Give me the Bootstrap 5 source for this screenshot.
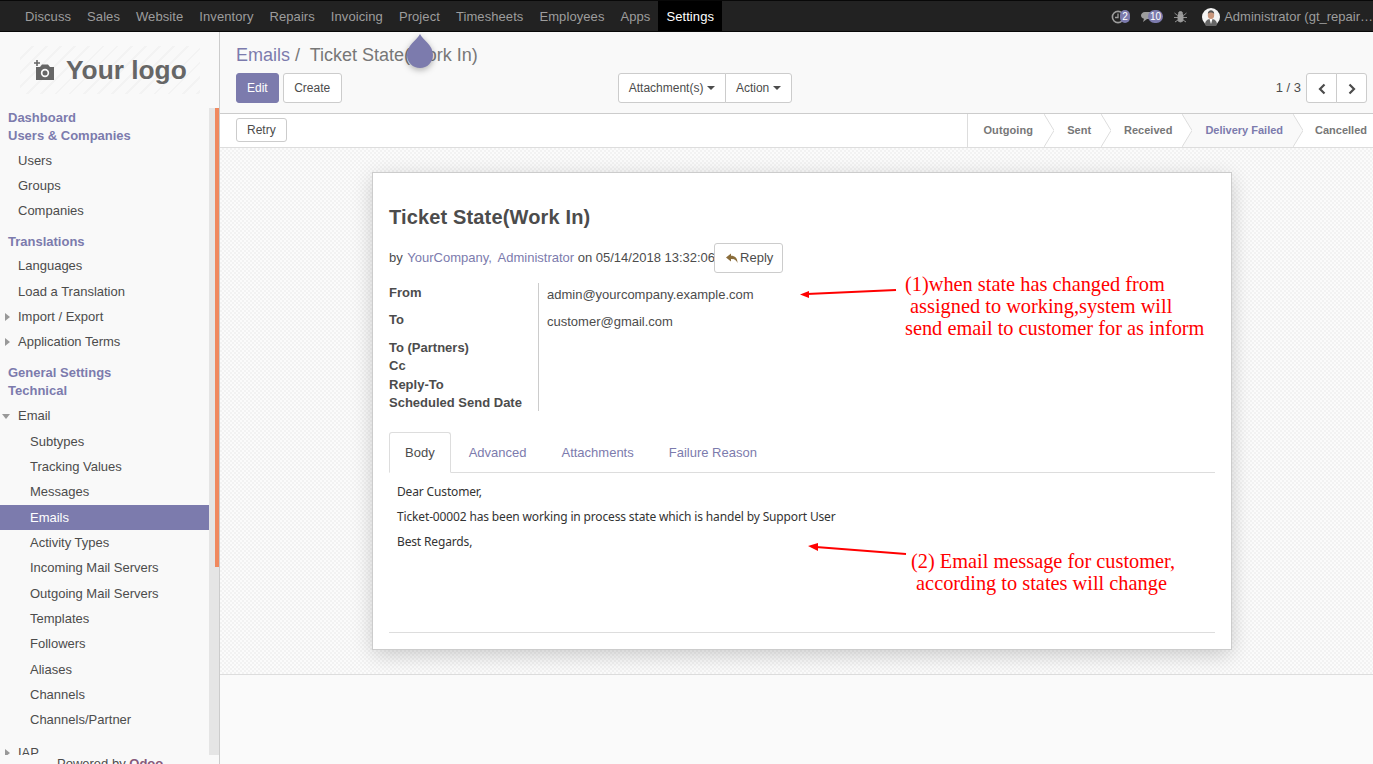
<!DOCTYPE html>
<html lang="en">
<head>
<meta charset="utf-8">
<title>Emails</title>
<link href="https://cdn.jsdelivr.net/npm/bootstrap@5.3.0/dist/css/bootstrap.min.css" rel="stylesheet">
<style>
html,body{height:764px;overflow:hidden}
body{font-family:"Liberation Sans",Arial,sans-serif;font-size:13px;color:#4c4c4c;background:#fff;line-height:18px}
.topbar{height:32px;background:#222;border:1px solid #080808;border-width:1px 0;padding:0 0 0 17px;flex-wrap:nowrap;justify-content:flex-start}
.topbar .nav-link{color:#9d9d9d;padding:0 8px;font-size:13px;line-height:31px;height:30px;letter-spacing:.08px}
.topbar .nav-link.on{color:#fff;background:#000}
.tright{margin-left:auto;color:#9d9d9d;height:30px;padding-top:1px}
.tbadge{background:#7c7bad;color:#fff;font-size:10px;line-height:13px;border-radius:7px;padding:0 2px;display:inline-block;min-width:10px;text-align:center}
.shell{height:732px}
.sidebar{width:220px;flex:none;background:#f9f9f9;border-right:1px solid #ccc;overflow:hidden}
.logobox{height:76px;padding:14px 0 0 20px}
.logoinner{width:180px;height:48px;background:repeating-linear-gradient(135deg,#f9f9f9 0 8px,#f3f3f3 8px 10px);color:#666;font-weight:700;font-size:26.300px;line-height:48px;padding-left:13px;gap:11px}
.menuwrap{height:647px}
.menucol{width:209px;overflow:hidden;padding-top:1px}
.track{width:10px;background:#e5e5e5;flex:none}
.thumb{width:4px;height:459px;background:#f0895f;margin-left:auto}
.mhead{display:block;font-weight:700;color:#7c7bad;height:18px;line-height:18px;padding-left:8px;text-decoration:none}
.mlist{margin:3px 0 9px}
.mlist.lista{margin:2.600px 0 9.400px}
.mlist.listb{margin:2.300px 0 9.700px}
.mlist.listc{margin:3px 0 7px}
.mrow{height:25.330px;line-height:25.330px;padding-left:18px;display:flex;align-items:center;color:#4c4c4c;position:relative}
.mrow.sub{padding-left:30px}
.mrow.on{background:#7c7bad;color:#fff}
.tri{position:absolute;left:5px;top:9px;width:0;height:0;border:4px solid transparent;border-left:5px solid #999;border-right:0}
.tri.open{left:2px;top:11px;border:4px solid transparent;border-top:5px solid #999;border-bottom:0}
.poweredby{height:9px;overflow:hidden;background:#f9f9f9;padding-left:57px;line-height:18px;font-size:13px;white-space:nowrap}
.poweredby b{color:#875a7b}
.mainpane{min-width:0;flex:1 1 0;background:#fafafa;position:relative}
.cpanel{height:82px;background:#f9f9f9;border-bottom:1px solid #ccc;padding:10px 6px 0 16px}
.crumbs{font-size:18px;line-height:26px;height:31px;color:#777}
.crumbs a{color:#7c7bad;text-decoration:none}
.btnrow{height:30px}
.xbtn{font-size:12px;line-height:16px;padding:6px 10px;height:30px;border-radius:3px;background:#fff;border:1px solid #ccc;color:#4c4c4c}
.xbtn.prim{background:#7c7bad;border-color:#7c7bad;color:#fff;padding:6px 10px}
.createx{padding:6px 10.500px}
.actx{padding:6px 9.500px}
.caretx{display:inline-block;border:4px solid transparent;border-top:4px solid currentColor;border-bottom:0;margin-left:4px;vertical-align:2px}
.pager{font-size:13px;color:#4c4c4c;margin-right:5px;line-height:30px}
.statusrow{height:34px;background:#fff;border-bottom:1px solid #ddd}
.retrybtn{height:24px;padding:2px 10px;font-size:12px;line-height:18px;margin:4px 0 0 16px}
.statuslist{margin-left:auto;height:33px;border-left:1px solid #ddd;font-weight:700;font-size:11px;color:#777;line-height:33px}
.stitem{padding:0 10px 0 13px;white-space:nowrap}
.stitem.first{padding:0 11px 0 15px;letter-spacing:.12px}
.stitem.last{padding:0 6px 0 12px}
.stitem.act{background:#f9f9f9;color:#7c7bad}
.chev{display:block;flex:none}
.sheetzone{height:527px;border-bottom:1px solid #ddd;padding:24px 0 0 152px;background-color:#fbfbfb;background-image:conic-gradient(#f2f2f2 25%,transparent 0 50%,#f2f2f2 0 75%,transparent 0);background-size:4px 4px}
.sheet{width:860px;height:478px;background:#fff;border:1px solid #ccc;box-shadow:0 5px 20px -1px rgba(0,0,0,.2);padding:30px 16px 0;position:relative}
.sheet h1{font-size:20px;font-weight:700;line-height:28px;margin:0 0 12px;color:#4c4c4c;letter-spacing:.15px}
.byline{height:40px;align-items:flex-start;line-height:30px;white-space:nowrap}
.bytext{margin-right:-1px}
.byline a{color:#7c7bad;text-decoration:none;margin-left:1px}
.byline a+a{margin-left:2px}
.replybtn{padding:5px 9px 5px 11px;display:flex;align-items:center;gap:2px;font-size:13px}
.infogrid{height:128px}
.labels{width:150px;font-weight:700;flex:none;border-right:1px solid #ccc;height:128px}
.labels div,.vals div{white-space:nowrap}
.l1{height:28px;padding-top:1px}.l2{height:28px}.l3{height:18.400px}
.vals{padding-left:8px}
.v1{height:28px;padding-top:3px}.v2{padding-top:2px}
.tabsx{margin-top:21px;border-bottom:1px solid #ddd;height:41px;font-size:13px}
.tabsx .nav-link{color:#7c7bad;padding:11px 15px;line-height:18px;height:41px;margin:0 3px 0 0;border-radius:3px 3px 0 0;font-size:13px}
.tabsx .nav-link.active{color:#4c4c4c;border-color:#ddd #ddd #fff;background:#fff;margin-right:2px}
.mailbody{font-family:"Noto Sans",sans-serif;font-size:12px;letter-spacing:-.15px;color:#333;padding:10px 8px 0;height:160px;border-bottom:1px solid #ddd}
.mailbody p{margin:0 0 7px;line-height:18px;height:18px}
.note{position:absolute;font-family:"Liberation Serif",serif;font-size:20.350px;line-height:22px;color:#f00;white-space:pre;margin:0}
.arr{position:absolute;display:block}
.drop{position:absolute;left:185px;top:1px;filter:drop-shadow(0 2px 3px rgba(0,0,0,.3))}
</style>
</head>
<body>
<nav class="navbar topbar d-flex">
  <ul class="nav flex-nowrap">
    <li class="nav-item"><a class="nav-link" href="#">Discuss</a></li>
    <li class="nav-item"><a class="nav-link" href="#">Sales</a></li>
    <li class="nav-item"><a class="nav-link" href="#">Website</a></li>
    <li class="nav-item"><a class="nav-link" href="#">Inventory</a></li>
    <li class="nav-item"><a class="nav-link" href="#">Repairs</a></li>
    <li class="nav-item"><a class="nav-link" href="#">Invoicing</a></li>
    <li class="nav-item"><a class="nav-link" href="#">Project</a></li>
    <li class="nav-item"><a class="nav-link" href="#">Timesheets</a></li>
    <li class="nav-item"><a class="nav-link" href="#">Employees</a></li>
    <li class="nav-item"><a class="nav-link" href="#">Apps</a></li>
    <li class="nav-item"><a class="nav-link on" href="#">Settings</a></li>
  </ul>
  <div class="d-flex align-items-center tright">
    <svg width="14" height="14" viewBox="0 0 14 14" class="chev"><circle cx="7" cy="7" r="5.600" fill="none" stroke="#9d9d9d" stroke-width="1.600"/><path d="M7 3.500V7.500H4" fill="none" stroke="#9d9d9d" stroke-width="1.300"/></svg>
    <span class="tbadge" style="margin-left:-5px">2</span>
    <svg width="14" height="12" viewBox="0 0 14 12" class="chev" style="margin-left:11px"><path d="M4 1h6c2.500 0 4 1.500 4 3.500S12.500 8 10 8H6l-4 3 1-3.200C1 7.300 0 6 0 4.500S1.500 1 4 1z" fill="#9d9d9d"/></svg>
    <span class="tbadge" style="margin-left:-7px">10</span>
    <svg width="13" height="13" viewBox="0 0 13 13" class="chev" style="margin-left:11px"><path d="M4 4.500h5v5a2.500 2.500 0 0 1-5 0zM4.500 3.500a2 2 0 0 1 4 0zM0.500 3l3 2.500M12.500 3l-3 2.500M0 7.500h4M13 7.500H9M1 12l3-2M12 12l-3-2" fill="#9d9d9d" stroke="#9d9d9d" stroke-width=".9"/></svg>
    <svg width="18" height="18" viewBox="0 0 18 18" class="chev" style="margin-left:15px"><circle cx="9" cy="9" r="9" fill="#f4f4f4"/><ellipse cx="9" cy="7" rx="3.200" ry="4" fill="#c9977c"/><path d="M5.800 6c0-5 6.400-5 6.400 0-1-2-5.400-2-6.400 0z" fill="#555"/><path d="M3 17c0-5 3-6 6-6s6 1 6 6a9 9 0 0 1-12 0z" fill="#666"/><path d="M7.500 11h3L9 16z" fill="#fff"/></svg>
    <span class="text-nowrap" style="margin-left:4px">Administrator (gt_repair…</span>
  </div>
</nav>
<div class="d-flex shell">
  <aside class="sidebar d-flex flex-column">
    <div class="logobox">
      <div class="logoinner d-flex align-items-center">
        <svg width="22" height="22" viewBox="0 0 22 22" class="chev"><path d="M4 1v6M1 4h6" stroke="#666" stroke-width="1.600"/><path d="M3 8h4l2-2.500h6L17 8h4v13H3z" fill="#666"/><circle cx="12" cy="14" r="4.200" fill="#f9f9f9"/><circle cx="12" cy="14" r="2.500" fill="#666"/></svg>
        <span>Your logo</span>
      </div>
    </div>
    <div class="d-flex menuwrap">
      <div class="menucol">
        <a class="mhead" href="#">Dashboard</a>
        <a class="mhead" href="#">Users &amp; Companies</a>
        <div class="mlist lista">
          <div class="mrow">Users</div><div class="mrow">Groups</div><div class="mrow">Companies</div>
        </div>
        <a class="mhead" href="#">Translations</a>
        <div class="mlist listb">
          <div class="mrow">Languages</div><div class="mrow">Load a Translation</div>
          <div class="mrow"><i class="tri"></i>Import / Export</div><div class="mrow"><i class="tri"></i>Application Terms</div>
        </div>
        <a class="mhead" href="#">General Settings</a>
        <a class="mhead" href="#">Technical</a>
        <div class="mlist listc">
          <div class="mrow"><i class="tri open"></i>Email</div>
          <div class="mrow sub">Subtypes</div><div class="mrow sub">Tracking Values</div><div class="mrow sub">Messages</div>
          <div class="mrow sub on">Emails</div>
          <div class="mrow sub">Activity Types</div><div class="mrow sub">Incoming Mail Servers</div><div class="mrow sub">Outgoing Mail Servers</div>
          <div class="mrow sub">Templates</div><div class="mrow sub">Followers</div><div class="mrow sub">Aliases</div><div class="mrow sub">Channels</div><div class="mrow sub">Channels/Partner</div>
        </div>
        <div class="mrow"><i class="tri"></i>IAP</div>
      </div>
      <div class="track"><div class="thumb"></div></div>
    </div>
    <div class="poweredby">Powered by <b>Odoo</b></div>
  </aside>
  <main class="mainpane">
    <svg class="drop" width="30" height="38" viewBox="0 0 30 38"><path d="M15 1C18 7 28 12 28 22A13 13 0 0 1 2 22C2 12 12 7 15 1z" fill="#7c7bad"/></svg>
    <div class="cpanel">
      <div class="crumbs"><a href="#">Emails</a> /&nbsp; Ticket State(Work In)</div>
      <div class="d-flex btnrow">
        <button class="btn xbtn prim" type="button">Edit</button>
        <button class="btn xbtn createx ms-1" type="button">Create</button>
        <div class="btn-group" style="margin-left:276px">
          <button class="btn xbtn" type="button">Attachment(s)<span class="caretx"></span></button>
          <button class="btn xbtn actx" type="button">Action<span class="caretx"></span></button>
        </div>
        <div class="ms-auto d-flex">
          <span class="pager">1 / 3</span>
          <div class="btn-group">
            <button class="btn xbtn" type="button" aria-label="Previous" style="width:31px;padding:0"><svg width="10" height="12" viewBox="0 0 10 12"><path d="M7.500 1.500 3 6l4.500 4.500" fill="none" stroke="#4c4c4c" stroke-width="2.200"/></svg></button>
            <button class="btn xbtn" type="button" aria-label="Next" style="width:31px;padding:0"><svg width="10" height="12" viewBox="0 0 10 12"><path d="M2.500 1.500 7 6l-4.500 4.500" fill="none" stroke="#4c4c4c" stroke-width="2.200"/></svg></button>
          </div>
        </div>
      </div>
    </div>
    <div class="statusrow d-flex">
      <button class="btn xbtn retrybtn" type="button">Retry</button>
      <div class="statuslist d-flex">
        <div class="stitem first">Outgoing</div>
        <svg class="chev" width="10" height="33" viewBox="0 0 10 33"><path d="M0 0 10 16.500 0 33" fill="none" stroke="#ddd"/></svg>
        <div class="stitem">Sent</div>
        <svg class="chev" width="10" height="33" viewBox="0 0 10 33"><path d="M0 0 10 16.500 0 33" fill="none" stroke="#ddd"/></svg>
        <div class="stitem">Received</div>
        <svg class="chev" width="10" height="33" viewBox="0 0 10 33"><path d="M0 0 10 16.500 0 33H10V0z" fill="#f9f9f9"/><path d="M0 0 10 16.500 0 33" fill="none" stroke="#ddd"/></svg>
        <div class="stitem act">Delivery Failed</div>
        <svg class="chev" width="10" height="33" viewBox="0 0 10 33"><path d="M0 0 10 16.500 0 33z" fill="#f9f9f9"/><path d="M0 0 10 16.500 0 33" fill="none" stroke="#ddd"/></svg>
        <div class="stitem last">Cancelled</div>
      </div>
    </div>
    <div class="sheetzone">
      <div class="sheet">
        <h1>Ticket State(Work In)</h1>
        <div class="d-flex byline">
          <span class="bytext">by <a href="#">YourCompany,</a>&nbsp;<a href="#">Administrator</a> on 05/14/2018 13:32:06</span>
          <button class="btn xbtn replybtn" type="button"><svg width="12" height="11" viewBox="0 0 12 11"><path d="M5 0.500 0 4.500l5 4V6c3 0 5 .5 6.500 4C11.500 5 9 2.800 5 2.800z" fill="#8a6d3b"/></svg>Reply</button>
        </div>
        <div class="d-flex infogrid">
          <div class="labels">
            <div class="l1">From</div><div class="l2">To</div><div class="l3">To (Partners)</div><div class="l3">Cc</div><div class="l3">Reply-To</div><div class="l3">Scheduled Send Date</div>
          </div>
          <div class="vals">
            <div class="v1">admin@yourcompany.example.com</div><div class="v2">customer@gmail.com</div>
          </div>
        </div>
        <ul class="nav nav-tabs tabsx">
          <li class="nav-item"><a class="nav-link active" href="#">Body</a></li>
          <li class="nav-item"><a class="nav-link" href="#">Advanced</a></li>
          <li class="nav-item"><a class="nav-link" href="#">Attachments</a></li>
          <li class="nav-item"><a class="nav-link" href="#">Failure Reason</a></li>
        </ul>
        <div class="mailbody">
          <p>Dear Customer,</p>
          <p>Ticket-00002 has been working in process state which is handel by Support User</p>
          <p>Best Regards,</p>
        </div>
        <svg class="arr" style="left:426px;top:112px" width="100" height="14" viewBox="0 0 100 14"><path d="M97 5 8 9" stroke="#f00" stroke-width="2"/><path d="M1 9.500 10 6v7z" fill="#f00"/></svg>
        <p class="note" style="left:532px;top:100px">(1)when state has changed from
 assigned to working,system will
send email to customer for as inform</p>
        <svg class="arr" style="left:434px;top:366px" width="100" height="18" viewBox="0 0 100 18"><path d="M99 15 9 8" stroke="#f00" stroke-width="2"/><path d="M1 7 11 4v8z" fill="#f00"/></svg>
        <p class="note" style="left:538px;top:377px">(2) Email message for customer,
 according to states will change</p>
      </div>
    </div>
  </main>
</div>
<script src="https://cdn.jsdelivr.net/npm/bootstrap@5.3.0/dist/js/bootstrap.bundle.min.js"></script>
</body>
</html>
